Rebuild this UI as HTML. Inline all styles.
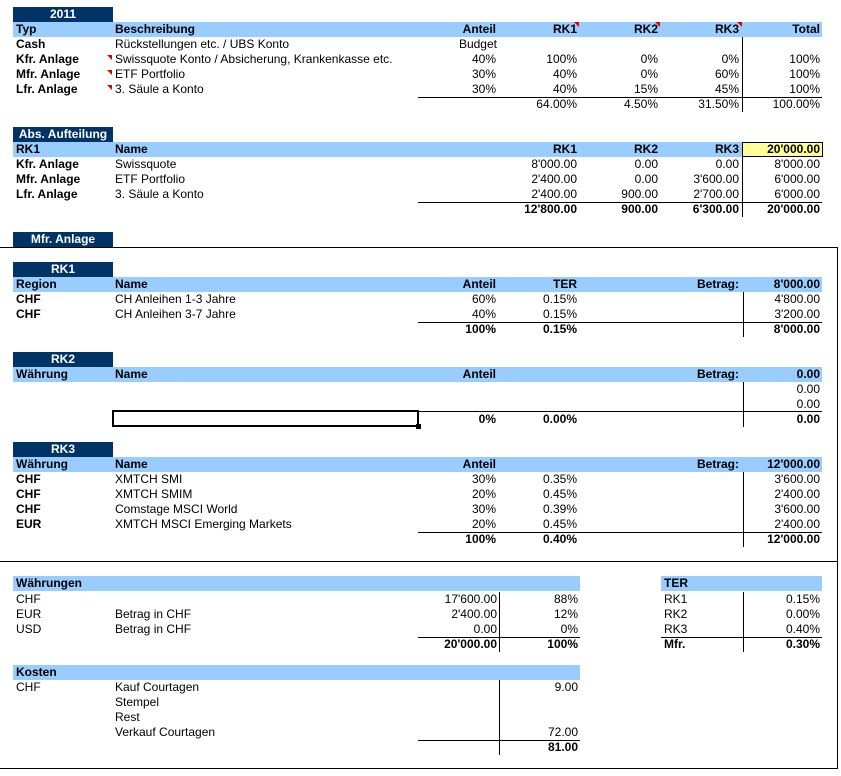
<!DOCTYPE html>
<html><head><meta charset="utf-8"><style>
*{margin:0;padding:0;box-sizing:border-box}
body{width:841px;height:776px;background:#fff;position:relative;overflow:hidden;font-family:"Liberation Sans",Arial,sans-serif;font-size:12px;color:#000}
div{position:absolute}
.t{height:15px;line-height:15px;white-space:nowrap}
.b{font-weight:bold}
.r{text-align:right}
.nv{background:#003366;color:#fff;font-weight:bold;text-align:center;height:15px;line-height:15px;left:13px;width:100px}
.lb{background:#99ccff;height:15px;left:13px}
.hl{height:1px;background:#000}
.vl{width:1px;background:#000}
.tri{width:0;height:0;border-top:5px solid #e00000;border-left:5px solid transparent}
</style></head><body>

<div class="nv" style="top:7px">2011</div>
<div class="lb" style="top:22px;width:809px"></div>
<div class="t b" style="top:22px;left:16px">Typ</div>
<div class="t b" style="top:22px;left:115px">Beschreibung</div>
<div class="t b r" style="top:22px;right:345px">Anteil</div>
<div class="t b r" style="top:22px;right:264px">RK1</div>
<div class="t b r" style="top:22px;right:183px">RK2</div>
<div class="t b r" style="top:22px;right:102px">RK3</div>
<div class="t b r" style="top:22px;right:21px">Total</div>
<div class="tri" style="top:22px;left:574px"></div>
<div class="tri" style="top:22px;left:655px"></div>
<div class="tri" style="top:22px;left:737px"></div>

<div class="t b" style="top:37px;left:16px">Cash</div>
<div class="t" style="top:37px;left:115px">Rückstellungen etc. / UBS Konto</div>
<div class="t r" style="top:37px;right:344px">Budget</div>

<div class="t b" style="top:52px;left:16px">Kfr. Anlage</div>
<div class="tri" style="top:55px;left:107px"></div>
<div class="t" style="top:52px;left:115px">Swissquote Konto / Absicherung, Krankenkasse etc.</div>
<div class="t r" style="top:52px;right:345px">40%</div>
<div class="t r" style="top:52px;right:264px">100%</div>
<div class="t r" style="top:52px;right:183px">0%</div>
<div class="t r" style="top:52px;right:102px">0%</div>
<div class="t r" style="top:52px;right:21px">100%</div>

<div class="t b" style="top:67px;left:16px">Mfr. Anlage</div>
<div class="tri" style="top:70px;left:107px"></div>
<div class="t" style="top:67px;left:115px">ETF Portfolio</div>
<div class="t r" style="top:67px;right:345px">30%</div>
<div class="t r" style="top:67px;right:264px">40%</div>
<div class="t r" style="top:67px;right:183px">0%</div>
<div class="t r" style="top:67px;right:102px">60%</div>
<div class="t r" style="top:67px;right:21px">100%</div>

<div class="t b" style="top:82px;left:16px">Lfr. Anlage</div>
<div class="tri" style="top:85px;left:107px"></div>
<div class="t" style="top:82px;left:115px">3. Säule a Konto</div>
<div class="t r" style="top:82px;right:345px">30%</div>
<div class="t r" style="top:82px;right:264px">40%</div>
<div class="t r" style="top:82px;right:183px">15%</div>
<div class="t r" style="top:82px;right:102px">45%</div>
<div class="t r" style="top:82px;right:21px">100%</div>

<div class="hl" style="top:97px;left:418px;width:404px"></div>
<div class="vl" style="top:37px;left:742px;height:75px"></div>
<div class="t r" style="top:97px;right:264px">64.00%</div>
<div class="t r" style="top:97px;right:183px">4.50%</div>
<div class="t r" style="top:97px;right:102px">31.50%</div>
<div class="t r" style="top:97px;right:21px">100.00%</div>

<div class="nv" style="top:127px">Abs. Aufteilung</div>
<div class="lb" style="top:142px;width:809px"></div>
<div style="top:142px;left:742px;width:81px;height:15px;background:#ffff99;border:1px solid #000"></div>
<div class="t b" style="top:142px;left:16px">RK1</div>
<div class="t b" style="top:142px;left:115px">Name</div>
<div class="t b r" style="top:142px;right:264px">RK1</div>
<div class="t b r" style="top:142px;right:183px">RK2</div>
<div class="t b r" style="top:142px;right:102px">RK3</div>
<div class="t b r" style="top:142px;right:21px">20'000.00</div>

<div class="t b" style="top:157px;left:16px">Kfr. Anlage</div>
<div class="t" style="top:157px;left:115px">Swissquote</div>
<div class="t r" style="top:157px;right:264px">8'000.00</div>
<div class="t r" style="top:157px;right:183px">0.00</div>
<div class="t r" style="top:157px;right:102px">0.00</div>
<div class="t r" style="top:157px;right:21px">8'000.00</div>

<div class="t b" style="top:172px;left:16px">Mfr. Anlage</div>
<div class="t" style="top:172px;left:115px">ETF Portfolio</div>
<div class="t r" style="top:172px;right:264px">2'400.00</div>
<div class="t r" style="top:172px;right:183px">0.00</div>
<div class="t r" style="top:172px;right:102px">3'600.00</div>
<div class="t r" style="top:172px;right:21px">6'000.00</div>

<div class="t b" style="top:187px;left:16px">Lfr. Anlage</div>
<div class="t" style="top:187px;left:115px">3. Säule a Konto</div>
<div class="t r" style="top:187px;right:264px">2'400.00</div>
<div class="t r" style="top:187px;right:183px">900.00</div>
<div class="t r" style="top:187px;right:102px">2'700.00</div>
<div class="t r" style="top:187px;right:21px">6'000.00</div>

<div class="hl" style="top:202px;left:418px;width:404px"></div>
<div class="vl" style="top:157px;left:742px;height:60px"></div>
<div class="t b r" style="top:202px;right:264px">12'800.00</div>
<div class="t b r" style="top:202px;right:183px">900.00</div>
<div class="t b r" style="top:202px;right:102px">6'300.00</div>
<div class="t b r" style="top:202px;right:21px">20'000.00</div>

<div class="nv" style="top:232px">Mfr. Anlage</div>
<div class="hl" style="top:247px;left:0;width:838px"></div>
<div class="vl" style="top:247px;left:837px;height:522px"></div>
<div class="hl" style="top:561px;left:0;width:838px"></div>
<div class="hl" style="top:768px;left:0;width:838px"></div>

<div class="nv" style="top:262px">RK1</div>
<div class="lb" style="top:277px;width:809px"></div>
<div class="t b" style="top:277px;left:16px">Region</div>
<div class="t b" style="top:277px;left:115px">Name</div>
<div class="t b r" style="top:277px;right:345px">Anteil</div>
<div class="t b r" style="top:277px;right:264px">TER</div>
<div class="t b r" style="top:277px;right:102px">Betrag:</div>
<div class="t b r" style="top:277px;right:21px">8'000.00</div>
<div class="t b" style="top:292px;left:16px">CHF</div>
<div class="t" style="top:292px;left:115px">CH Anleihen 1-3 Jahre</div>
<div class="t r" style="top:292px;right:345px">60%</div>
<div class="t r" style="top:292px;right:264px">0.15%</div>
<div class="t r" style="top:292px;right:21px">4'800.00</div>
<div class="t b" style="top:307px;left:16px">CHF</div>
<div class="t" style="top:307px;left:115px">CH Anleihen 3-7 Jahre</div>
<div class="t r" style="top:307px;right:345px">40%</div>
<div class="t r" style="top:307px;right:264px">0.15%</div>
<div class="t r" style="top:307px;right:21px">3'200.00</div>
<div class="hl" style="top:322px;left:418px;width:404px"></div>
<div class="vl" style="top:292px;left:743px;height:45px"></div>
<div class="t b r" style="top:322px;right:345px">100%</div>
<div class="t b r" style="top:322px;right:264px">0.15%</div>
<div class="t b r" style="top:322px;right:21px">8'000.00</div>

<div class="nv" style="top:352px">RK2</div>
<div class="lb" style="top:367px;width:809px"></div>
<div class="t b" style="top:367px;left:16px">Währung</div>
<div class="t b" style="top:367px;left:115px">Name</div>
<div class="t b r" style="top:367px;right:345px">Anteil</div>
<div class="t b r" style="top:367px;right:102px">Betrag:</div>
<div class="t b r" style="top:367px;right:21px">0.00</div>
<div class="t r" style="top:382px;right:21px">0.00</div>
<div class="t r" style="top:397px;right:21px">0.00</div>
<div class="hl" style="top:411px;left:418px;width:404px"></div>
<div class="vl" style="top:382px;left:743px;height:45px"></div>
<div style="top:410px;left:112px;width:307px;height:17px;border:2px solid #000"></div>
<div style="top:424px;left:416px;width:5px;height:5px;background:#000"></div>
<div class="t b r" style="top:412px;right:345px">0%</div>
<div class="t b r" style="top:412px;right:264px">0.00%</div>
<div class="t b r" style="top:412px;right:21px">0.00</div>

<div class="nv" style="top:442px">RK3</div>
<div class="lb" style="top:457px;width:809px"></div>
<div class="t b" style="top:457px;left:16px">Währung</div>
<div class="t b" style="top:457px;left:115px">Name</div>
<div class="t b r" style="top:457px;right:345px">Anteil</div>
<div class="t b r" style="top:457px;right:102px">Betrag:</div>
<div class="t b r" style="top:457px;right:21px">12'000.00</div>
<div class="t b" style="top:472px;left:16px">CHF</div>
<div class="t" style="top:472px;left:115px">XMTCH SMI</div>
<div class="t r" style="top:472px;right:345px">30%</div>
<div class="t r" style="top:472px;right:264px">0.35%</div>
<div class="t r" style="top:472px;right:21px">3'600.00</div>
<div class="t b" style="top:487px;left:16px">CHF</div>
<div class="t" style="top:487px;left:115px">XMTCH SMIM</div>
<div class="t r" style="top:487px;right:345px">20%</div>
<div class="t r" style="top:487px;right:264px">0.45%</div>
<div class="t r" style="top:487px;right:21px">2'400.00</div>
<div class="t b" style="top:502px;left:16px">CHF</div>
<div class="t" style="top:502px;left:115px">Comstage MSCI World</div>
<div class="t r" style="top:502px;right:345px">30%</div>
<div class="t r" style="top:502px;right:264px">0.39%</div>
<div class="t r" style="top:502px;right:21px">3'600.00</div>
<div class="t b" style="top:517px;left:16px">EUR</div>
<div class="t" style="top:517px;left:115px">XMTCH MSCI Emerging Markets</div>
<div class="t r" style="top:517px;right:345px">20%</div>
<div class="t r" style="top:517px;right:264px">0.45%</div>
<div class="t r" style="top:517px;right:21px">2'400.00</div>
<div class="hl" style="top:532px;left:418px;width:404px"></div>
<div class="vl" style="top:472px;left:743px;height:75px"></div>
<div class="t b r" style="top:532px;right:345px">100%</div>
<div class="t b r" style="top:532px;right:264px">0.40%</div>
<div class="t b r" style="top:532px;right:21px">12'000.00</div>

<div class="lb" style="top:576px;width:567px"></div>
<div class="t b" style="top:576px;left:16px">Währungen</div>
<div class="t" style="top:592px;left:16px">CHF</div>
<div class="t r" style="top:592px;right:344px">17'600.00</div>
<div class="t r" style="top:592px;right:263px">88%</div>
<div class="t" style="top:607px;left:16px">EUR</div>
<div class="t" style="top:607px;left:115px">Betrag in CHF</div>
<div class="t r" style="top:607px;right:344px">2'400.00</div>
<div class="t r" style="top:607px;right:263px">12%</div>
<div class="t" style="top:622px;left:16px">USD</div>
<div class="t" style="top:622px;left:115px">Betrag in CHF</div>
<div class="t r" style="top:622px;right:344px">0.00</div>
<div class="t r" style="top:622px;right:263px">0%</div>
<div class="hl" style="top:637px;left:418px;width:162px"></div>
<div class="vl" style="top:592px;left:499px;height:60px"></div>
<div class="t b r" style="top:637px;right:344px">20'000.00</div>
<div class="t b r" style="top:637px;right:263px">100%</div>

<div class="lb" style="top:576px;left:661px;width:161px"></div>
<div class="t b" style="top:576px;left:664px">TER</div>
<div class="t" style="top:592px;left:664px">RK1</div>
<div class="t r" style="top:592px;right:21px">0.15%</div>
<div class="t" style="top:607px;left:664px">RK2</div>
<div class="t r" style="top:607px;right:21px">0.00%</div>
<div class="t" style="top:622px;left:664px">RK3</div>
<div class="t r" style="top:622px;right:21px">0.40%</div>
<div class="hl" style="top:637px;left:661px;width:161px"></div>
<div class="vl" style="top:592px;left:743px;height:60px"></div>
<div class="t b" style="top:637px;left:664px">Mfr.</div>
<div class="t b r" style="top:637px;right:21px">0.30%</div>

<div class="lb" style="top:665px;width:567px"></div>
<div class="t b" style="top:665px;left:16px">Kosten</div>
<div class="t" style="top:680px;left:16px">CHF</div>
<div class="t" style="top:680px;left:115px">Kauf Courtagen</div>
<div class="t r" style="top:680px;right:263px">9.00</div>
<div class="t" style="top:695px;left:115px">Stempel</div>
<div class="t" style="top:710px;left:115px">Rest</div>
<div class="t" style="top:725px;left:115px">Verkauf Courtagen</div>
<div class="t r" style="top:725px;right:263px">72.00</div>
<div class="hl" style="top:740px;left:418px;width:162px"></div>
<div class="vl" style="top:680px;left:499px;height:75px"></div>
<div class="t b r" style="top:740px;right:263px">81.00</div>

</body></html>
